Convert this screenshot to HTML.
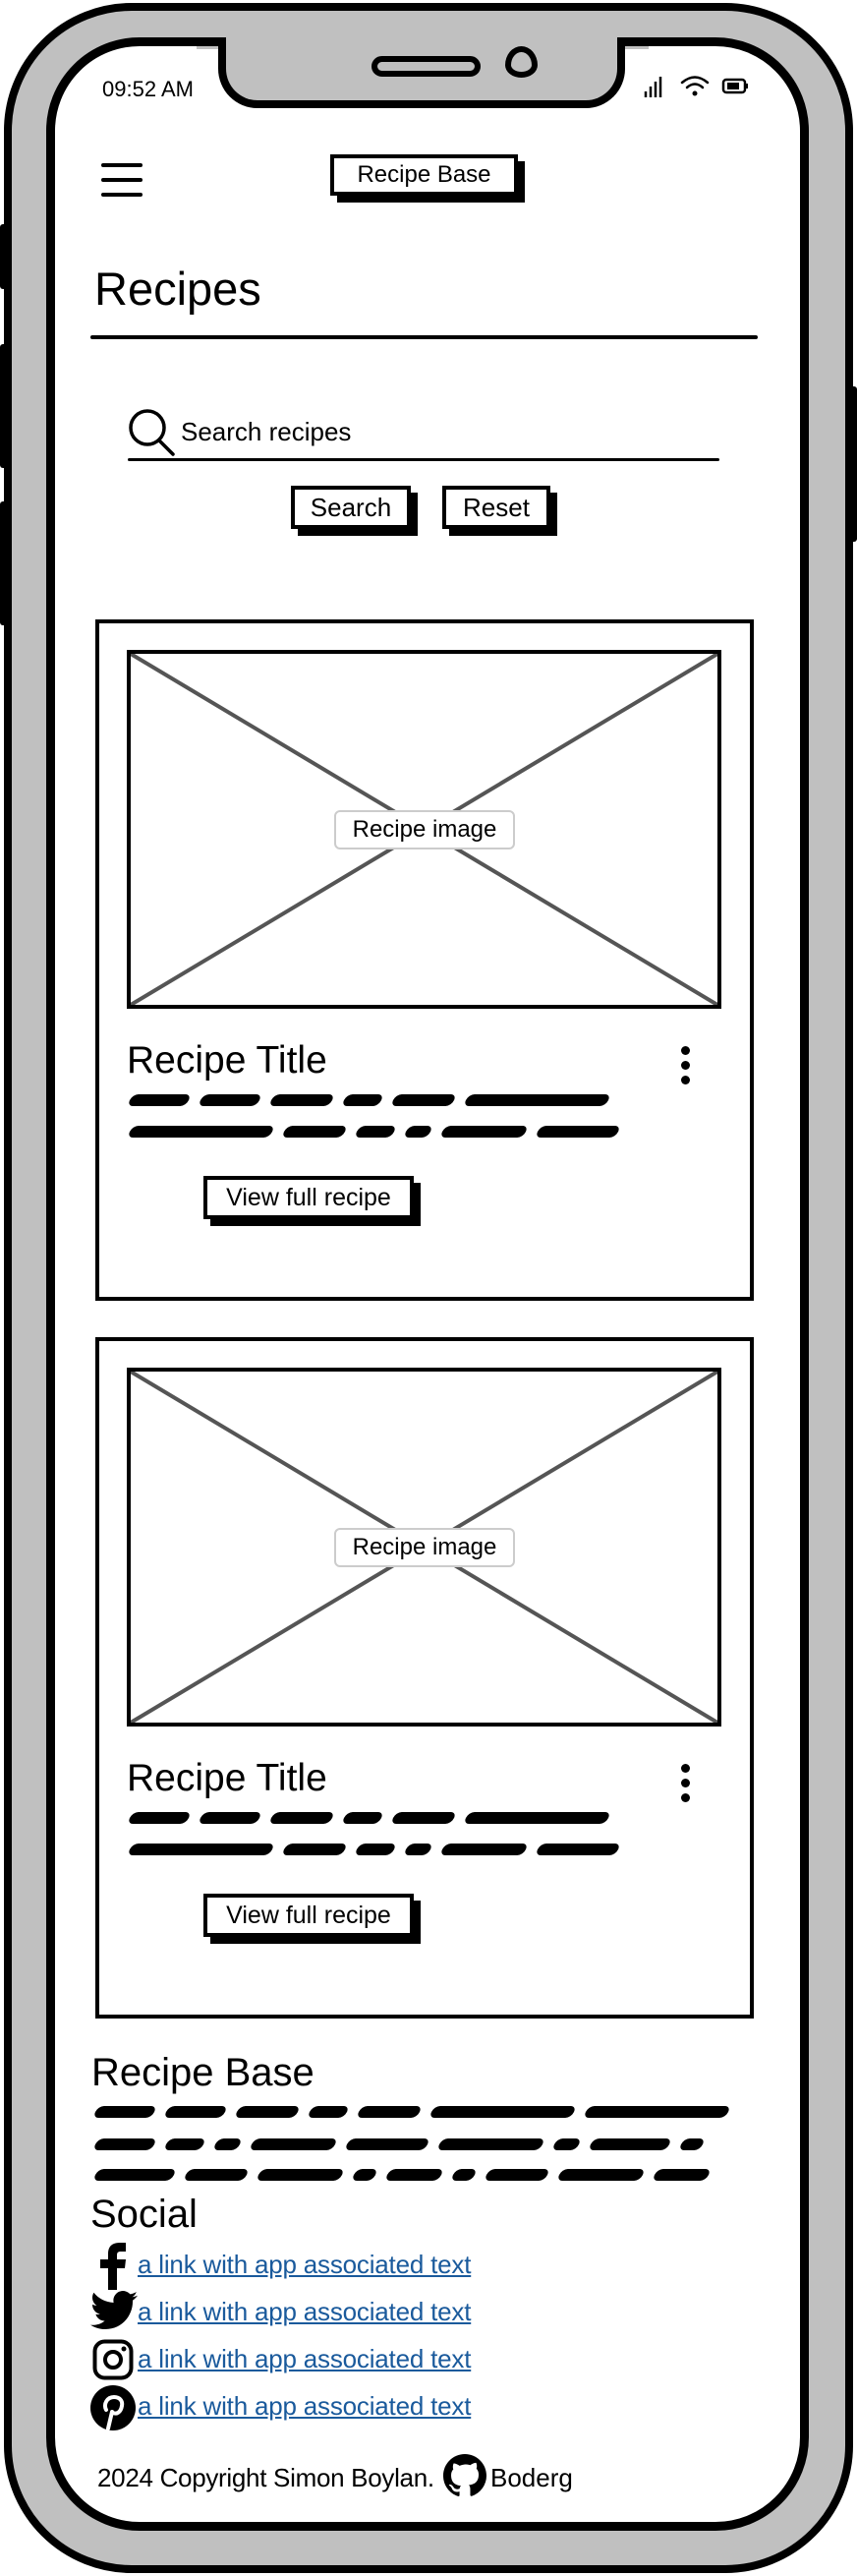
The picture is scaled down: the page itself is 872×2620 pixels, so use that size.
<!DOCTYPE html>
<html><head><meta charset="utf-8"><style>
*{margin:0;padding:0;box-sizing:border-box}
body{width:872px;height:2620px;background:#fff;position:relative;overflow:hidden;font-family:"Liberation Sans",sans-serif;color:#000}
.a{position:absolute}
.btn{position:absolute;background:#fff;border:4px solid #000;box-shadow:7px 7px 0 #000;display:flex;align-items:center;justify-content:center;font-size:25px}
.scr{position:absolute;height:12px;display:flex;gap:12px}
.scr i{display:block;height:12px;background:#000;border-radius:6px;transform:skewX(-25deg)}
.lnk{position:absolute;left:140px;font-size:26px;color:#1a5a9c;text-decoration:underline;letter-spacing:-0.2px}
</style></head><body>
<div class="a" style="left:0;top:228px;width:8px;height:66px;background:#000;border-radius:3px"></div>
<div class="a" style="left:0;top:350px;width:8px;height:126px;background:#000;border-radius:3px"></div>
<div class="a" style="left:0;top:510px;width:8px;height:126px;background:#000;border-radius:3px"></div>
<div class="a" style="left:864px;top:393px;width:8px;height:158px;background:#000;border-radius:3px"></div>
<div class="a" style="left:4px;top:3px;width:864px;height:2614px;border:8px solid #000;border-radius:130px;background:#c0c0c0"></div>
<div class="a" style="left:47px;top:38px;width:776px;height:2536px;border:9px solid #000;border-radius:95px;background:#fff"></div>
<div class="a" style="left:200px;top:30px;width:460px;height:20px;background:#c0c0c0"></div>
<div class="a" style="left:222px;top:36px;width:414px;height:74px;border:8px solid #000;border-top:none;border-radius:0 0 40px 40px;background:#c0c0c0"></div>
<div class="a" style="left:180px;top:38px;width:50px;height:9px;background:#000;border-radius:0 6px 0 0"></div>
<div class="a" style="left:628px;top:38px;width:50px;height:9px;background:#000;border-radius:6px 0 0 0"></div>
<div class="a" style="left:200px;top:30px;width:460px;height:8px;background:#c0c0c0"></div>
<div class="a" style="left:378px;top:57px;width:111px;height:21px;border:6px solid #000;border-radius:11px;background:#c0c0c0"></div>
<div class="a" style="left:514px;top:47px;width:33px;height:32px;border:6px solid #000;border-radius:50% 50% 50% 50%/60% 60% 40% 40%;background:#c0c0c0"></div>
<div class="a" style="left:104px;top:78px;font-size:22px">09:52 AM</div>
<svg class="a" style="left:655px;top:75px" width="110" height="25" viewBox="0 0 110 25">
<g stroke="#000" stroke-width="2.5"><line x1="2" y1="24" x2="2" y2="18"/><line x1="7" y1="24" x2="7" y2="13"/><line x1="12" y1="24" x2="12" y2="8"/><line x1="17" y1="24" x2="17" y2="3"/></g>
<g fill="none" stroke="#000" stroke-width="2.5" stroke-linecap="round"><path d="M39 9 Q52 -2 65 9"/><path d="M44 14 Q52 7 60 14"/></g>
<circle cx="52" cy="20" r="2.5"/>
<rect x="81" y="6" width="22" height="13" rx="3" fill="none" stroke="#000" stroke-width="2.5"/><rect x="85" y="9" width="12" height="7"/><rect x="103" y="10" width="3" height="5"/>
</svg>
<div class="a" style="left:103px;top:166px;width:42px;height:4px;background:#000;border-radius:2px"></div>
<div class="a" style="left:103px;top:181px;width:42px;height:4px;background:#000;border-radius:2px"></div>
<div class="a" style="left:103px;top:196px;width:42px;height:4px;background:#000;border-radius:2px"></div>
<div class="btn" style="left:336px;top:157px;width:191px;height:42px;font-size:24px">Recipe Base</div>
<div class="a" style="left:96px;top:266px;font-size:47px">Recipes</div>
<div class="a" style="left:92px;top:341px;width:679px;height:4px;background:#000;border-radius:2px"></div>
<svg class="a" style="left:128px;top:415px" width="52" height="50" viewBox="0 0 52 50"><circle cx="22" cy="20" r="17" fill="none" stroke="#000" stroke-width="3.5"/><line x1="34" y1="33" x2="48" y2="47" stroke="#000" stroke-width="3.5" stroke-linecap="round"/></svg>
<div class="a" style="left:184px;top:424px;font-size:26px">Search recipes</div>
<div class="a" style="left:130px;top:466px;width:602px;height:3px;background:#000;border-radius:2px"></div>
<div class="btn" style="left:296px;top:494px;width:122px;height:44px;font-size:26px">Search</div>
<div class="btn" style="left:450px;top:494px;width:110px;height:44px;font-size:26px">Reset</div>

<div class="a" style="left:97px;top:630px;width:670px;height:693px;border:4px solid #000"></div>
<div class="a" style="left:129px;top:661px;width:605px;height:365px;border:4px solid #000"></div>
<svg class="a" style="left:133px;top:665px" width="597" height="357"><line x1="0" y1="0" x2="597" y2="357" stroke="#555" stroke-width="4"/><line x1="597" y1="0" x2="0" y2="357" stroke="#555" stroke-width="4"/></svg>
<div class="a" style="left:340px;top:824px;width:184px;height:40px;background:#fff;border:2px solid #ccc;border-radius:6px;font-size:24px;text-align:center;line-height:36px">Recipe image</div>
<div class="a" style="left:129px;top:1057px;font-size:39px">Recipe Title</div>
<div class="a" style="left:693px;top:1064px;width:9px;height:9px;border-radius:50%;background:#000"></div>
<div class="a" style="left:693px;top:1079px;width:9px;height:9px;border-radius:50%;background:#000"></div>
<div class="a" style="left:693px;top:1094px;width:9px;height:9px;border-radius:50%;background:#000"></div>
<div class="scr" style="left:132px;top:1113px"><i style="width:60px"></i><i style="width:60px"></i><i style="width:62px"></i><i style="width:38px"></i><i style="width:62px"></i><i style="width:145px"></i></div>
<div class="scr" style="left:132px;top:1145px"><i style="width:145px"></i><i style="width:62px"></i><i style="width:38px"></i><i style="width:25px"></i><i style="width:85px"></i><i style="width:82px"></i></div>
<div class="btn" style="left:207px;top:1196px;width:214px;height:44px;font-size:25px">View full recipe</div>

<div class="a" style="left:97px;top:1360px;width:670px;height:693px;border:4px solid #000"></div>
<div class="a" style="left:129px;top:1391px;width:605px;height:365px;border:4px solid #000"></div>
<svg class="a" style="left:133px;top:1395px" width="597" height="357"><line x1="0" y1="0" x2="597" y2="357" stroke="#555" stroke-width="4"/><line x1="597" y1="0" x2="0" y2="357" stroke="#555" stroke-width="4"/></svg>
<div class="a" style="left:340px;top:1554px;width:184px;height:40px;background:#fff;border:2px solid #ccc;border-radius:6px;font-size:24px;text-align:center;line-height:36px">Recipe image</div>
<div class="a" style="left:129px;top:1787px;font-size:39px">Recipe Title</div>
<div class="a" style="left:693px;top:1794px;width:9px;height:9px;border-radius:50%;background:#000"></div>
<div class="a" style="left:693px;top:1809px;width:9px;height:9px;border-radius:50%;background:#000"></div>
<div class="a" style="left:693px;top:1824px;width:9px;height:9px;border-radius:50%;background:#000"></div>
<div class="scr" style="left:132px;top:1843px"><i style="width:60px"></i><i style="width:60px"></i><i style="width:62px"></i><i style="width:38px"></i><i style="width:62px"></i><i style="width:145px"></i></div>
<div class="scr" style="left:132px;top:1875px"><i style="width:145px"></i><i style="width:62px"></i><i style="width:38px"></i><i style="width:25px"></i><i style="width:85px"></i><i style="width:82px"></i></div>
<div class="btn" style="left:207px;top:1926px;width:214px;height:44px;font-size:25px">View full recipe</div>

<div class="a" style="left:93px;top:2086px;font-size:40px">Recipe Base</div>
<div class="scr" style="left:97px;top:2142px"><i style="width:60px"></i><i style="width:60px"></i><i style="width:62px"></i><i style="width:38px"></i><i style="width:62px"></i><i style="width:145px"></i><i style="width:145px"></i></div>
<div class="scr" style="left:97px;top:2175px"><i style="width:60px"></i><i style="width:38px"></i><i style="width:25px"></i><i style="width:85px"></i><i style="width:82px"></i><i style="width:105px"></i><i style="width:25px"></i><i style="width:80px"></i><i style="width:22px"></i></div>
<div class="scr" style="left:97px;top:2206px"><i style="width:80px"></i><i style="width:62px"></i><i style="width:85px"></i><i style="width:22px"></i><i style="width:55px"></i><i style="width:22px"></i><i style="width:62px"></i><i style="width:85px"></i><i style="width:55px"></i></div>
<div class="a" style="left:92px;top:2230px;font-size:40px">Social</div>
<svg class="a" style="left:98px;top:2281px" width="34" height="48" viewBox="0 0 34 48"><path d="M12 48V26H4v-9h8v-6C12 4 16 0 24 0h6v9h-5c-3 0-4 1-4 4v4h9l-1 9h-8v22z"/></svg>
<div class="lnk" style="top:2288px">a link with app associated text</div>
<svg class="a" style="left:92px;top:2329px" width="48" height="42" viewBox="0 0 24 20"><path d="M24 2.4c-.9.4-1.8.6-2.8.8 1-.6 1.8-1.6 2.2-2.7-1 .6-2 1-3.1 1.2C19.3.7 18 0 16.6 0c-2.7 0-4.9 2.2-4.9 4.9 0 .4 0 .8.1 1.1C7.7 5.8 4.100 3.900 1.7.9c-.4.7-.7 1.6-.7 2.5 0 1.7.9 3.2 2.2 4.1-.8 0-1.6-.2-2.2-.6v.1c0 2.4 1.7 4.4 3.9 4.8-.4.1-.8.2-1.3.2-.3 0-.6 0-.9-.1.6 2 2.4 3.4 4.6 3.4-1.7 1.3-3.800 2.100-6.1 2.1-.4 0-.8 0-1.2-.1 2.2 1.4 4.8 2.2 7.5 2.2 9.1 0 14-7.5 14-14v-.6c1-.7 1.8-1.6 2.5-2.5z"/></svg>
<div class="lnk" style="top:2336px">a link with app associated text</div>
<svg class="a" style="left:94px;top:2379px" width="42" height="42" viewBox="0 0 42 42"><rect x="2.5" y="2.5" width="37" height="37" rx="10" fill="none" stroke="#000" stroke-width="4"/><circle cx="21" cy="21" r="8" fill="none" stroke="#000" stroke-width="4"/><circle cx="32" cy="10" r="2.5"/></svg>
<div class="lnk" style="top:2384px">a link with app associated text</div>
<svg class="a" style="left:92px;top:2426px" width="46" height="46" viewBox="0 0 46 46"><circle cx="23" cy="23" r="23"/><path d="M18 44l4-17M16 25c-3-6 1-13 8-13 6 0 9 4 8 9-1 6-5 9-9 7" fill="none" stroke="#fff" stroke-width="4" stroke-linecap="round"/></svg>
<div class="lnk" style="top:2432px">a link with app associated text</div>
<div class="a" style="left:99px;top:2505px;font-size:26px;letter-spacing:-0.3px">2024 Copyright Simon Boylan.</div>
<svg class="a" style="left:451px;top:2496px" width="44" height="44" viewBox="0 0 16 16"><path d="M8 0C3.58 0 0 3.58 0 8c0 3.54 2.29 6.530 5.47 7.59.4.07.55-.17.55-.38v-1.33c-2.23.48-2.7-.94-2.7-.94-.36-.92-.89-1.17-.89-1.17-.73-.5.06-.49.06-.49.8.06 1.23.83 1.23.83.72 1.23 1.87.87 2.33.67.07-.52.28-.87.51-1.07-1.78-.2-3.64-.89-3.64-3.95 0-.87.31-1.59.82-2.15-.08-.2-.36-1.02.08-2.12 0 0 .67-.21 2.2.82A7.6 7.6 0 0 1 8 3.8c.68 0 1.36.09 2 .27 1.53-1.04 2.2-.82 2.2-.82.44 1.1.16 1.92.08 2.12.51.56.82 1.270.82 2.15 0 3.07-1.87 3.75-3.65 3.95.29.25.54.73.54 1.48v2.2c0 .21.15.46.55.38A8 8 0 0 0 16 8c0-4.42-3.58-8-8-8z"/></svg>
<div class="a" style="left:499px;top:2505px;font-size:26px">Boderg</div>
</body></html>
